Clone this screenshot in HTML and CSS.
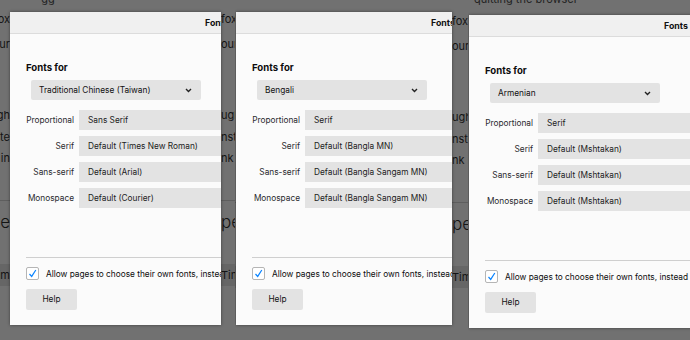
FILE: index.html
```html
<!DOCTYPE html>
<html>
<head>
<meta charset="utf-8">
<link rel="stylesheet" href="styles.css">
</head>
<body>
<div class="desk">
  <section class="shot s1">
    <div class="bg">
      <div class="bgrow top"><span class="l">g</span><span class="r">g</span></div>
      <div class="bgrow first"><span class="l">ox</span><span class="r">fox</span></div>
      <div class="bgrow our"><span class="l">ur</span><span class="r">our</span></div>
      <div class="bgrow ugh"><span class="l">ugh</span><span class="r">ugh</span></div>
      <div class="bgrow ste"><span class="l">ste</span><span class="r">nste</span></div>
      <div class="bgrow kin"><span class="l">k in</span><span class="r">nk in</span></div>
      <div class="bgline"></div>
      <div class="bgrow big"><span class="l">pe</span><span class="r">pe</span></div>
      <div class="bgband"><span class="l">im</span><span class="r">Tim</span></div>
    </div>
    <div class="dialog">
      <div class="dhead">Fonts</div>
      <div class="dbody">
        <div class="ftitle">Fonts for</div>
        <div class="select"><span>Traditional Chinese (Taiwan)</span><svg class="chev" width="7" height="5" viewBox="0 0 7 5"><path d="M1 1l2.5 2.5L6 1" fill="none" stroke="#222" stroke-width="1.4"/></svg></div>
        <div class="rows">
          <div class="lab">Proportional</div><div class="box">Sans Serif</div>
          <div class="lab">Serif</div><div class="box">Default (Times New Roman)</div>
          <div class="lab">Sans-serif</div><div class="box">Default (Arial)</div>
          <div class="lab">Monospace</div><div class="box">Default (Courier)</div>
        </div>
        <div class="sep"></div>
        <div class="check"><span class="cb"><svg width="11" height="11" viewBox="0 0 11 11"><path d="M2.5 6l2.2 2.4L8.8 2" fill="none" stroke="#0a84ff" stroke-width="1.2"/></svg></span><span class="ctext">Allow pages to choose their own fonts, instead</span></div>
        <div class="btn">Help</div>
      </div>
    </div>
  </section>

  <section class="shot s2">
    <div class="bg">
      <div class="bgrow first"><span class="l"></span><span class="r">fox</span></div>
      <div class="bgrow our"><span class="l"></span><span class="r">our</span></div>
      <div class="bgrow ugh"><span class="l"></span><span class="r">ugh</span></div>
      <div class="bgrow ste"><span class="l"></span><span class="r">nste</span></div>
      <div class="bgrow kin"><span class="l"></span><span class="r">nk in</span></div>
      <div class="bgline"></div>
      <div class="bgrow big"><span class="l"></span><span class="r">pe</span></div>
      <div class="bgband"><span class="l"></span><span class="r">Tim</span></div>
    </div>
    <div class="dialog">
      <div class="dhead">Fonts</div>
      <div class="dbody">
        <div class="ftitle">Fonts for</div>
        <div class="select"><span>Bengali</span><svg class="chev" width="7" height="5" viewBox="0 0 7 5"><path d="M1 1l2.5 2.5L6 1" fill="none" stroke="#222" stroke-width="1.4"/></svg></div>
        <div class="rows">
          <div class="lab">Proportional</div><div class="box">Serif</div>
          <div class="lab">Serif</div><div class="box">Default (Bangla MN)</div>
          <div class="lab">Sans-serif</div><div class="box">Default (Bangla Sangam MN)</div>
          <div class="lab">Monospace</div><div class="box">Default (Bangla Sangam MN)</div>
        </div>
        <div class="sep"></div>
        <div class="check"><span class="cb"><svg width="11" height="11" viewBox="0 0 11 11"><path d="M2.5 6l2.2 2.4L8.8 2" fill="none" stroke="#0a84ff" stroke-width="1.2"/></svg></span><span class="ctext">Allow pages to choose their own fonts, instead</span></div>
        <div class="btn">Help</div>
      </div>
    </div>
  </section>

  <section class="shot s3">
    <div class="bg">
      <div class="bgrow top"><span class="l"></span><span class="r">quitting the browser</span></div>
    </div>
    <div class="dialog">
      <div class="dhead">Fonts</div>
      <div class="dbody">
        <div class="ftitle">Fonts for</div>
        <div class="select"><span>Armenian</span><svg class="chev" width="7" height="5" viewBox="0 0 7 5"><path d="M1 1l2.5 2.5L6 1" fill="none" stroke="#222" stroke-width="1.4"/></svg></div>
        <div class="rows">
          <div class="lab">Proportional</div><div class="box">Serif</div>
          <div class="lab">Serif</div><div class="box">Default (Mshtakan)</div>
          <div class="lab">Sans-serif</div><div class="box">Default (Mshtakan)</div>
          <div class="lab">Monospace</div><div class="box">Default (Mshtakan)</div>
        </div>
        <div class="sep"></div>
        <div class="check"><span class="cb"><svg width="11" height="11" viewBox="0 0 11 11"><path d="M2.5 6l2.2 2.4L8.8 2" fill="none" stroke="#0a84ff" stroke-width="1.2"/></svg></span><span class="ctext">Allow pages to choose their own fonts, instead</span></div>
        <div class="btn">Help</div>
      </div>
    </div>
  </section>
</div>
</body>
</html>
```

FILE: styles.css
```css
html, body {
  margin: 0;
  padding: 0;
}
body {
  width: 690px;
  height: 340px;
  overflow: hidden;
  font-family: Inter, "Liberation Sans", sans-serif;
  background: #717171;
}
.desk {
  display: flex;
  width: 690px;
  height: 340px;
  overflow: hidden;
}
.shot {
  position: relative;
  height: 340px;
  overflow: hidden;
  flex: none;
}
.s1 { width: 235px; --lw: 10px; --mw: 211px; }
.s2 { width: 233px; --lw: 1px; --mw: 216px; }
.s3 { width: 222px; --lw: 1px; --mw: 300px; }

/* dimmed page behind the dialog */
.bg {
  display: flex;
  flex-direction: column;
  color: #141414;
  font-size: 11px;
}
.s2 .bg { padding-top: 2px; }
.bgrow, .bgband {
  display: grid;
  grid-template-columns: var(--lw) 1fr;
  column-gap: var(--mw);
  white-space: nowrap;
  height: 14px;
  line-height: 14px;
}
.bgrow .l, .bgband .l {
  overflow: hidden;
  text-align: right;
  direction: rtl;
}
.bgrow .r, .bgband .r {
  overflow: hidden;
}
.bgrow.top { height: 12px; line-height: 12px; margin-top: -7px; color: #222; }
.s1 .bgrow.top { grid-template-columns: 48px 1fr; column-gap: 0; }
.s3 .bgrow.top { grid-template-columns: 6px 1fr; column-gap: 0; }
.bgrow.first { margin-top: 7px; }
.s2 .bgrow.first { margin-top: 12px; }
.bgrow.our { margin-top: 11px; }
.bgrow.ugh { margin-top: 57px; }
.bgrow.ste { margin-top: 8px; }
.bgrow.kin { margin-top: 7px; }
.bgline {
  margin-top: 35px;
  height: 1px;
  background: rgba(0, 0, 0, 0.16);
}
.bgrow.big {
  margin-top: 11px;
  height: 20px;
  line-height: 20px;
  font-size: 17px;
  font-weight: 300;
}
.bgband {
  margin-top: 32px;
  height: 22px;
  line-height: 22px;
  background: rgba(0, 0, 0, 0.09);
}

/* the sub-dialog */
.dialog {
  position: absolute;
  top: 12px;
  background: #fbfbfb;
  box-shadow: 0 0 3px rgba(0, 0, 0, 0.45);
  overflow: hidden;
  color: #0c0c0d;
  font-size: 8.3px;
}
.s1 .dialog { left: 10px; width: 211px; }
.s2 .dialog { left: 1px; width: 216px; }
.s3 .dialog { left: 1px; top: 15px; width: 300px; }

.dhead {
  height: 21px;
  line-height: 22px;
  background: #f0f0f0;
  border-bottom: 1px solid #dcdcdc;
  padding-left: 195px;
  font-weight: 700;
  font-size: 8.8px;
  white-space: nowrap;
  overflow: hidden;
  color: #111;
}
.dbody {
  padding: 0 16px 15px;
}
.ftitle {
  margin-top: 27px;
  height: 14px;
  line-height: 14px;
  font-size: 9.6px;
  font-weight: 700;
}
.select {
  margin-top: 5px;
  margin-left: 5px;
  width: 170px;
  height: 20px;
  box-sizing: border-box;
  padding: 0 9px 0 8px;
  background: #e3e3e3;
  border-radius: 2px;
  display: flex;
  align-items: center;
  justify-content: space-between;
  color: #111;
}
.chev { display: block; }
.rows {
  margin-top: 10px;
  display: grid;
  grid-template-columns: 48px 300px;
  column-gap: 5px;
  row-gap: 6px;
}
.lab {
  height: 20px;
  line-height: 20px;
  text-align: right;
  white-space: nowrap;
  color: #2a2a2e;
}
.box {
  height: 20px;
  line-height: 20px;
  padding-left: 9px;
  background: #e3e3e3;
  white-space: nowrap;
  color: #1c1c1c;
}
.sep {
  margin-top: 49px;
  margin-right: -120px;
  height: 1px;
  background: #cfcfcf;
}
.check {
  margin-top: 9px;
  height: 13px;
  display: flex;
  align-items: center;
  gap: 7px;
  white-space: nowrap;
}
.cb {
  flex: none;
  width: 13px;
  height: 13px;
  box-sizing: border-box;
  border: 1px solid #b5b5b5;
  border-radius: 2px;
  background: #fff;
  display: flex;
  align-items: center;
  justify-content: center;
}
.cb svg { display: block; }
.btn {
  margin-top: 9px;
  width: 51px;
  height: 21px;
  line-height: 21px;
  text-align: center;
  background: #e3e3e3;
  border-radius: 2px;
  color: #111;
}
```
